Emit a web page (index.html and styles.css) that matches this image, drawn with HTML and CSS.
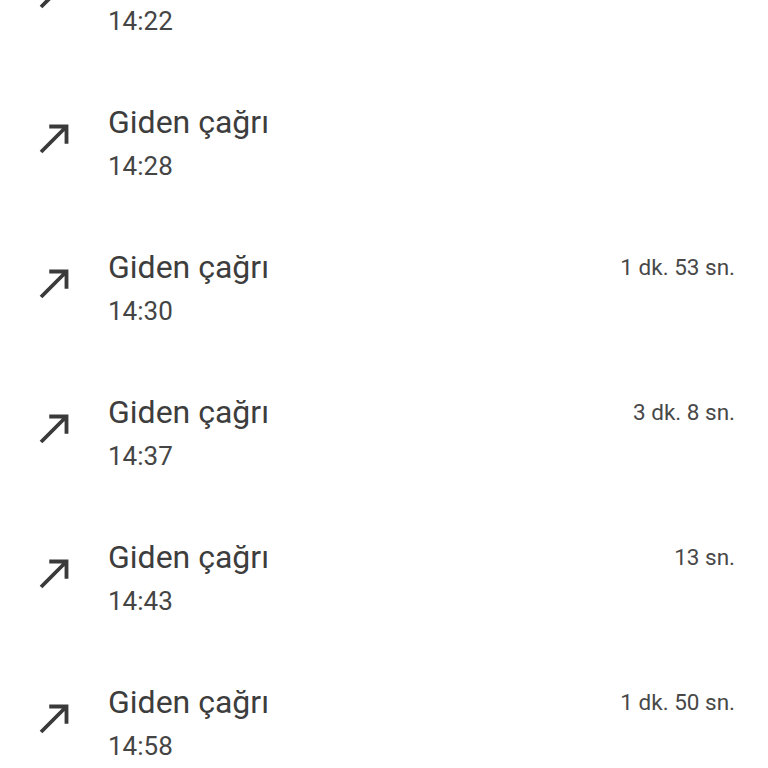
FILE: index.html
```html
<!DOCTYPE html>
<html lang="tr">
<head>
<meta charset="utf-8">
<link rel="stylesheet" href="styles.css">
</head>
<body>
<ul class="calls">
  <li class="call">
    <svg class="icon" viewBox="0 0 24 24"><path d="M9 5v2h6.59L4 18.59 5.41 20 17 8.41V15h2V5z"/></svg>
    <div class="info"><div class="title">Giden çağrı</div><div class="time">14:22</div></div>
    <div class="dur"></div>
  </li>
  <li class="call">
    <svg class="icon" viewBox="0 0 24 24"><path d="M9 5v2h6.59L4 18.59 5.41 20 17 8.41V15h2V5z"/></svg>
    <div class="info"><div class="title">Giden çağrı</div><div class="time">14:28</div></div>
    <div class="dur"></div>
  </li>
  <li class="call">
    <svg class="icon" viewBox="0 0 24 24"><path d="M9 5v2h6.59L4 18.59 5.41 20 17 8.41V15h2V5z"/></svg>
    <div class="info"><div class="title">Giden çağrı</div><div class="time">14:30</div></div>
    <div class="dur">1 dk. 53 sn.</div>
  </li>
  <li class="call">
    <svg class="icon" viewBox="0 0 24 24"><path d="M9 5v2h6.59L4 18.59 5.41 20 17 8.41V15h2V5z"/></svg>
    <div class="info"><div class="title">Giden çağrı</div><div class="time">14:37</div></div>
    <div class="dur">3 dk. 8 sn.</div>
  </li>
  <li class="call">
    <svg class="icon" viewBox="0 0 24 24"><path d="M9 5v2h6.59L4 18.59 5.41 20 17 8.41V15h2V5z"/></svg>
    <div class="info"><div class="title">Giden çağrı</div><div class="time">14:43</div></div>
    <div class="dur">13 sn.</div>
  </li>
  <li class="call">
    <svg class="icon" viewBox="0 0 24 24"><path d="M9 5v2h6.59L4 18.59 5.41 20 17 8.41V15h2V5z"/></svg>
    <div class="info"><div class="title">Giden çağrı</div><div class="time">14:58</div></div>
    <div class="dur">1 dk. 50 sn.</div>
  </li>
</ul>
</body>
</html>
```
FILE: styles.css
```css
html, body {
  margin: 0;
  padding: 0;
  background: #ffffff;
  overflow: hidden;
}
body {
  font-family: Roboto, "Noto Sans", sans-serif;
  width: 768px;
  height: 768px;
}
.calls {
  list-style: none;
  margin: -75px 0 0 0;
  padding: 0;
}
.call {
  height: 145px;
  box-sizing: border-box;
  padding: 30px 33px 0 32px;
  display: flex;
  align-items: flex-start;
}
.icon {
  width: 46px;
  height: 46px;
  fill: #3a3a3a;
  margin-top: 15px;
  flex: none;
}
.info {
  margin-left: 30px;
  flex: 1;
}
.title {
  font-size: 32px;
  line-height: 44px;
  color: #3d3d3d;
}
.time {
  font-size: 26px;
  line-height: 44px;
  color: #454545;
}
.dur {
  font-size: 22.5px;
  line-height: 44px;
  color: #484848;
  white-space: nowrap;
}
```
